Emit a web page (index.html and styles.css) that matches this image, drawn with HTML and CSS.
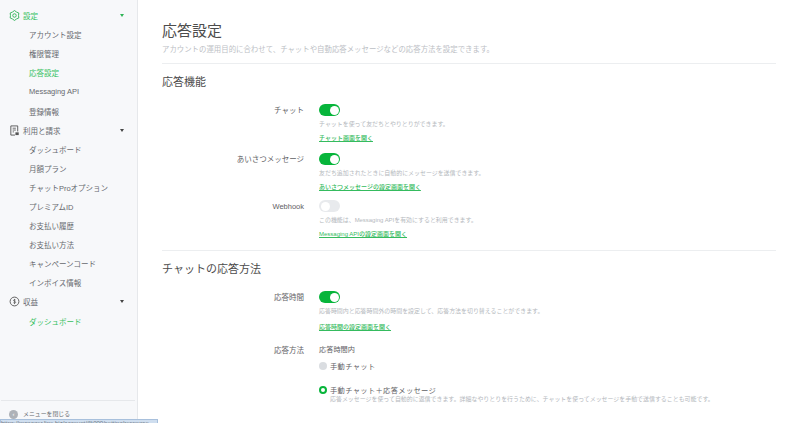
FILE: index.html
```html
<!DOCTYPE html>
<html lang="ja">
<head>
<meta charset="utf-8">
<title>応答設定</title>
<link rel="stylesheet" href="styles.css">
</head>
<body>
<div class="app">
  <aside class="side">
    <nav class="nav">
      <div class="nav-head on">
        <svg class="nav-ico" viewBox="0 0 12 12"><path d="M6 .6L8.2 2.200 10.700 3.300 10.400 6 10.700 8.700 8.200 9.800 6 11.400 3.800 9.800 1.300 8.700 1.600 6 1.300 3.300 3.800 2.200z" fill="none" stroke="#2fb457" stroke-width="1" stroke-linejoin="round"/><circle cx="6" cy="6" r="1.900" fill="none" stroke="#2fb457" stroke-width="1"/></svg>
        <span class="nav-title">設定</span><i class="caret"></i>
      </div>
      <a class="nav-item">アカウント設定</a>
      <a class="nav-item">権限管理</a>
      <a class="nav-item on">応答設定</a>
      <a class="nav-item">Messaging API</a>
      <a class="nav-item">登録情報</a>
      <div class="nav-head">
        <svg class="nav-ico" viewBox="0 0 12 12"><path d="M9.500 7V1H2v10h4.500" fill="none" stroke="#555" stroke-width="1"/><path d="M4 3.500h3.500M4 5.500h3.500M4 7.500h1.500" stroke="#555" stroke-width=".9"/><rect x="7" y="8" width="3.600" height="3" fill="#555"/></svg>
        <span class="nav-title">利用と請求</span><i class="caret"></i>
      </div>
      <a class="nav-item">ダッシュボード</a>
      <a class="nav-item">月額プラン</a>
      <a class="nav-item">チャットProオプション</a>
      <a class="nav-item">プレミアムID</a>
      <a class="nav-item">お支払い履歴</a>
      <a class="nav-item">お支払い方法</a>
      <a class="nav-item">キャンペーンコード</a>
      <a class="nav-item">インボイス情報</a>
      <div class="nav-head">
        <svg class="nav-ico" viewBox="0 0 12 12"><circle cx="6" cy="6" r="4.800" fill="none" stroke="#555" stroke-width="1"/><path d="M7.300 4.600C7 3.900 5 3.700 4.900 4.800c0 1.300 2.400.7 2.400 2.100 0 1.200-2.100 1-2.500.3M6 3.200v5.600" fill="none" stroke="#555" stroke-width=".8"/></svg>
        <span class="nav-title">収益</span><i class="caret"></i>
      </div>
      <a class="nav-item on">ダッシュボード</a>
    </nav>
    <div class="side-foot">
      <span class="close-dot">‹</span><span class="close-text">メニューを閉じる</span>
    </div>
  </aside>
  <main class="main">
    <h1 class="title">応答設定</h1>
    <p class="lead">アカウントの運用目的に合わせて、チャットや自動応答メッセージなどの応答方法を設定できます。</p>
    <section class="sec">
      <h2 class="sec-title">応答機能</h2>
      <div class="row row-first">
        <div class="label">チャット</div>
        <div class="val">
          <span class="tog is-on"></span>
          <p class="desc">チャットを使って友だちとやりとりができます。</p>
          <a class="link">チャット画面を開く</a>
        </div>
      </div>
      <div class="row">
        <div class="label">あいさつメッセージ</div>
        <div class="val">
          <span class="tog is-on"></span>
          <p class="desc">友だち追加されたときに自動的にメッセージを送信できます。</p>
          <a class="link">あいさつメッセージの設定画面を開く</a>
        </div>
      </div>
      <div class="row row-hook">
        <div class="label">Webhook</div>
        <div class="val">
          <span class="tog"></span>
          <p class="desc">この機能は、Messaging APIを有効にすると利用できます。</p>
          <a class="link">Messaging APIの設定画面を開く</a>
        </div>
      </div>
    </section>
    <section class="sec sec-2">
      <h2 class="sec-title">チャットの応答方法</h2>
      <div class="row row-first2">
        <div class="label">応答時間</div>
        <div class="val">
          <span class="tog is-on"></span>
          <p class="desc">応答時間内と応答時間外の時間を設定して、応答方法を切り替えることができます。</p>
          <a class="link link-far">応答時間の設定画面を開く</a>
        </div>
      </div>
      <div class="row row-method">
        <div class="label">応答方法</div>
        <div class="val">
          <div class="sub">応答時間内</div>
          <div class="radio"><span class="dot"></span><span class="opt">手動チャット</span></div>
          <div class="radio radio-2"><span class="dot is-on"></span><span class="opt">手動チャット＋応答メッセージ</span></div>
          <p class="desc opt-desc">応答メッセージを使って自動的に返信できます。詳細なやりとりを行うために、チャットを使ってメッセージを手動で送信することも可能です。</p>
        </div>
      </div>
    </section>
  </main>
</div>
<div class="status">https://manager.line.biz/account/@000/setting/response</div>
</body>
</html>
```
FILE: styles.css
```css
* { box-sizing: border-box; }
html, body { margin: 0; height: 423px; overflow: hidden; }
body {
  font-family: "Liberation Sans", "Noto Sans CJK JP", sans-serif;
  color: #555;
  background: #fff;
  position: relative;
}
.app { display: flex; height: 423px; }
.side {
  width: 138px;
  flex: none;
  background: #f7f8fa;
  border-right: 1px solid #e6e8eb;
  padding-top: 6px;
  display: flex;
  flex-direction: column;
}
.nav { flex: 1; }
.nav-head, .nav-item {
  height: 19.1px;
  display: flex;
  align-items: center;
  font-size: 7.5px;
  color: #66696e;
}
.nav-head { padding: 0 13px 0 9px; }
.nav-item { padding-left: 29px; }
.nav-item.on, .nav-head.on { color: #35c15f; }
.nav-ico { width: 11px; height: 11px; flex: none; margin-right: 3px; }
.nav-title { flex: 1; }
.caret {
  width: 0; height: 0;
  border-left: 2.5px solid transparent;
  border-right: 2.5px solid transparent;
  border-top: 3px solid #444;
}
.nav-head.on .caret { border-top-color: #2fb457; }
.side-foot {
  margin: 0 2px 0 1px;
  border-top: 1px solid #e6e8eb;
  height: 23px;
  padding: 9px 0 0 8px;
  display: flex;
  align-items: flex-start;
  font-size: 5.9px;
  color: #66696e;
}
.close-dot {
  width: 9px; height: 9px;
  border-radius: 50%;
  background: #aeb2b8;
  color: #fff;
  margin-right: 5px;
  line-height: 9px;
  text-align: center;
}
.close-text { line-height: 9px; }
.main { flex: 1; padding: 21px 24px 0; min-width: 0; }
.title { margin: 0; font-size: 15px; line-height: 20px; font-weight: 400; color: #4c4c4c; }
.lead { margin: 3px 0 0; font-size: 7.41px; line-height: 11px; color: #bcc0c5; white-space: nowrap; }
.sec { border-top: 1px solid #eceef0; margin-top: 8px; padding-top: 10px; }
.sec-2 { margin-top: 11px; }
.sec-title { margin: 0; font-size: 11px; line-height: 16px; font-weight: 400; color: #4c4c4c; }
.row { display: grid; grid-template-columns: 142px 1fr; column-gap: 15px; margin-top: 10px; }
.row-first { margin-top: 14px; }
.row-hook { margin-top: 8px; }
.row-first2 { margin-top: 14px; }
.row-method { margin-top: 12px; }
.label { font-size: 7.5px; line-height: 14px; text-align: right; color: #5f6165; }
.val { min-width: 0; }
.tog {
  display: block;
  width: 21px; height: 12px;
  border-radius: 6px;
  background: #e8eaed;
  position: relative;
}
.tog::after {
  content: "";
  position: absolute;
  top: 1.5px; left: 1.5px;
  width: 9px; height: 9px;
  border-radius: 50%;
  background: #fff;
}
.tog.is-on { background: #07b53b; }
.tog.is-on::after { left: 10.5px; }
.desc { margin: 4px 0 0; font-size: 5.95px; line-height: 9px; color: #b4b8bd; white-space: nowrap; }
.link {
  display: block;
  margin-top: 5px;
  font-size: 6px;
  line-height: 9px;
  color: #35bb5e;
  text-decoration: underline;
  font-weight: 500;
}
.link-far { margin-top: 7px; }
.sub { font-size: 7.2px; line-height: 12px; color: #5f6165; }
.radio { display: flex; align-items: center; margin-top: 4px; height: 12px; font-size: 7.3px; color: #5f6165; }
.radio-2 { margin-top: 12px; height: 11px; }
.dot { width: 8px; height: 8px; border-radius: 50%; background: #dadde1; margin-right: 3px; flex: none; }
.dot.is-on { background: #fff; border: 2.5px solid #07b53b; }
.opt { letter-spacing: .3px; }
.opt-desc { margin: 0 0 0 11px; }
.status {
  position: absolute;
  left: 0; bottom: 0;
  width: 158px; height: 4px;
  background: #cfdeef;
  border: 1px solid #a8c0dc;
  border-bottom: 0;
  font-size: 6px;
  line-height: 6px;
  color: #6b7480;
  overflow: hidden;
  white-space: nowrap;
}
```
